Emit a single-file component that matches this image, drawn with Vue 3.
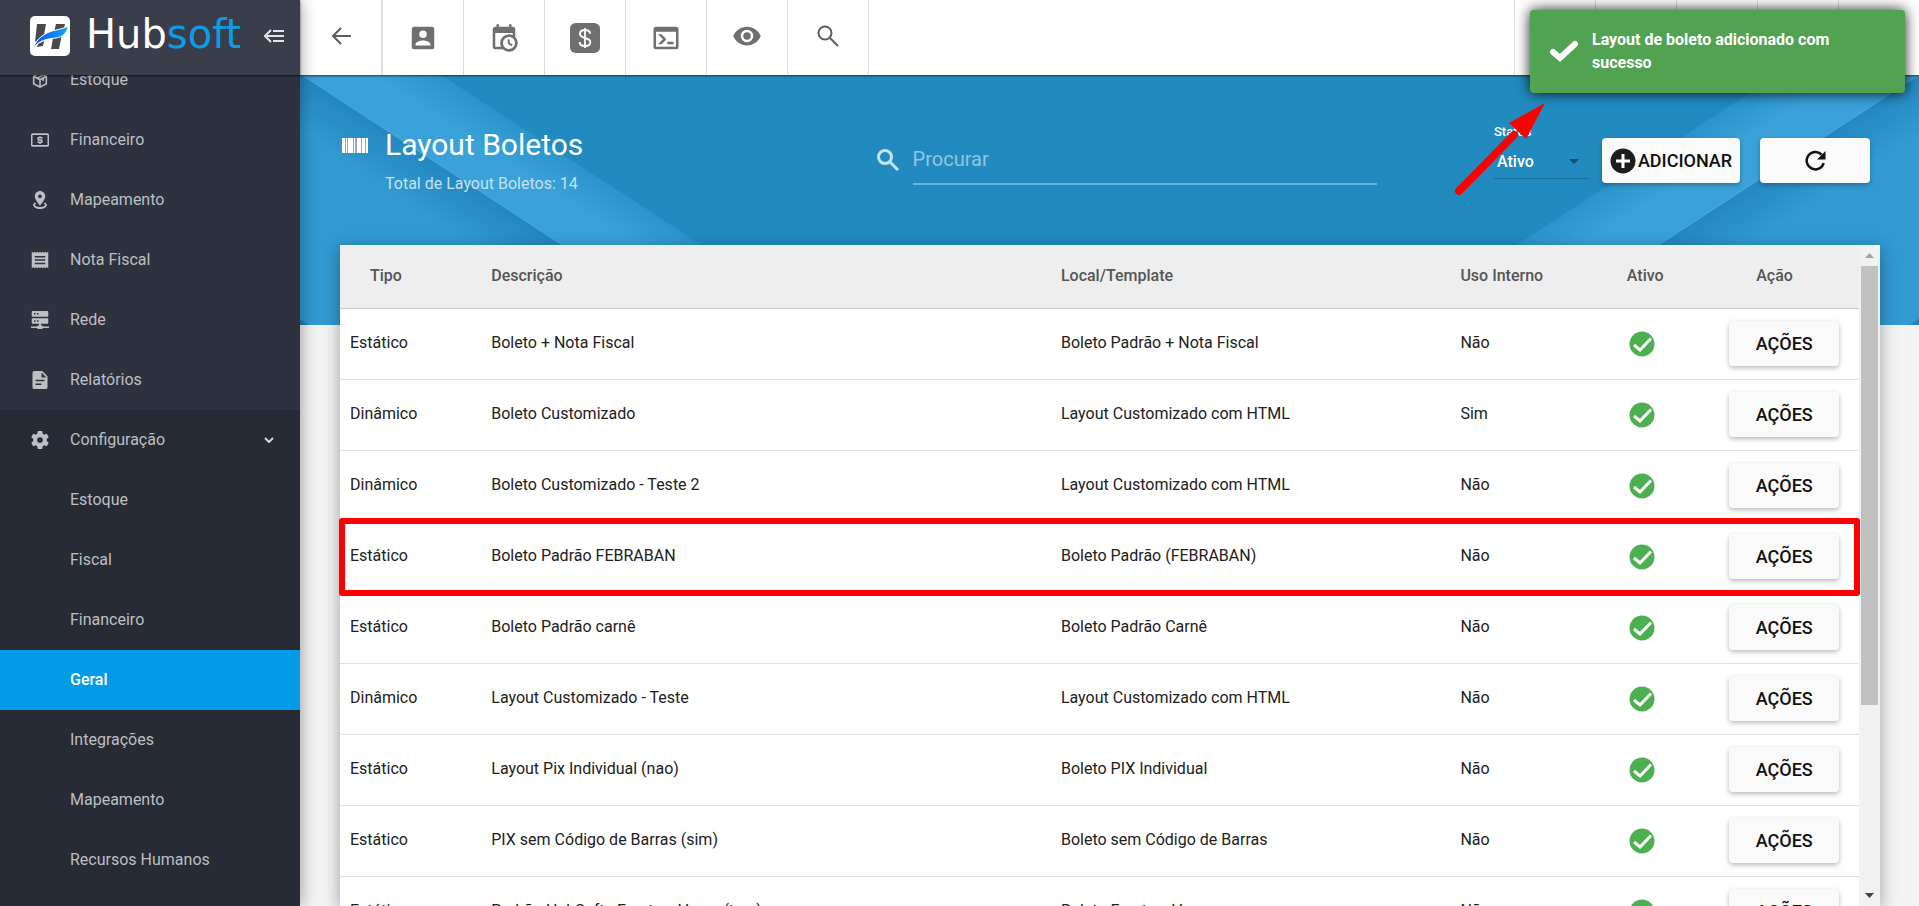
<script setup>
import { ref } from 'vue'

const menu = [
  { label: 'Estoque', icon: 'box' },
  { label: 'Financeiro', icon: 'cash' },
  { label: 'Mapeamento', icon: 'pin' },
  { label: 'Nota Fiscal', icon: 'receipt' },
  { label: 'Rede', icon: 'server' },
  { label: 'Relatórios', icon: 'file' },
]
const submenu = ['Estoque', 'Fiscal', 'Financeiro', 'Geral', 'Integrações', 'Mapeamento', 'Recursos Humanos']
const active = ref('Geral')

const icons = {
  box: 'M12 1.5 2.5 6.4v11.2L12 22.500l9.500-4.900V6.400L12 1.500Zm0 2.500 2.200 1.100-6 3.200L6 7.100 12 4Zm4.300 2.200L18 7.100l-6 3.100-1.700-.9 6-3.100ZM4.600 8.900 11 12.200v7.300l-6.400-3.300V8.900Zm14.800 0v7.300L13 19.500v-7.300l2.300-1.200v3l2-1v-3l2.100-1.100Z',
  cash: 'M2 3h20a2 2 0 0 1 2 2v14a2 2 0 0 1-2 2H2a2 2 0 0 1-2-2V5a2 2 0 0 1 2-2Zm0 2.300v13.400h20V5.300H2ZM11 7h2v1h2.500v2H10.500v1h4a1 1 0 0 1 1 1v3a1 1 0 0 1-1 1H13v1.200h-2V16H8.500v-2h5v-1h-4a1 1 0 0 1-1-1V9a1 1 0 0 1 1-1H11V7Z',
  pin: 'M12 0c3.900 0 7 3.100 7 7 0 4.700-7 12.500-7 12.500S5 11.700 5 7c0-3.900 3.100-7 7-7Zm0 4.500A2.500 2.500 0 1 0 12 9.500a2.500 2.500 0 0 0 0-5ZM5.800 15.200l1.300 1.900c-1.100.5-1.800 1-1.800 1.500 0 1.400 3 2.700 6.700 2.700s6.700-1.300 6.700-2.700c0-.5-.7-1-1.800-1.500l1.300-1.900c1.900.9 3 2.100 3 3.400 0 3-4.100 5.400-9.200 5.400s-9.200-2.400-9.200-5.400c0-1.300 1.100-2.500 3-3.400Z',
  receipt: 'M1 1l1.800 1.200L4.600 1l1.900 1.200L8.300 1l1.900 1.200L12 1l1.800 1.200L15.700 1l1.800 1.200L19.400 1l1.800 1.200L23 1v22l-1.800-1.200-1.800 1.200-1.900-1.200-1.800 1.200-1.900-1.200L12 23l-1.800-1.200L8.300 23l-1.800-1.200L4.600 23l-1.800-1.200L1 23V1Zm4 5.500v2h14v-2H5Zm0 4.500v2h14v-2H5Zm0 4.500v2h14v-2H5Z',
  server: 'M2 0h20a1 1 0 0 1 1 1v5.500a1 1 0 0 1-1 1H2a1 1 0 0 1-1-1V1a1 1 0 0 1 1-1Zm2 2.700v2h2v-2H4Zm4 0v2h2v-2H8ZM2 9.500h20a1 1 0 0 1 1 1V16a1 1 0 0 1-1 1h-8.500v2.500H16V20.500h8v2.300h-8.500V24h-7v-1.200H0v-2.300h8v-1h2.500V17H2a1 1 0 0 1-1-1v-5.500a1 1 0 0 1 1-1Zm2 2.700v2h2v-2H4Zm4 0v2h2v-2H8Z',
  file: 'M4.500 0H15l7 7v14.500a2.500 2.500 0 0 1-2.500 2.500h-15A2.500 2.500 0 0 1 2 21.500v-19A2.500 2.500 0 0 1 4.500 0ZM14 2v6.500h6.500L14 2ZM6 11.500v2h12v-2H6Zm0 5v2h8v-2H6Z',
  gear: 'M12 8.200A3.800 3.800 0 1 0 12 15.800a3.800 3.800 0 0 0 0-7.600Zm8.900 5.100 2.500 1.900c.2.200.3.500.1.800l-2.300 4c-.1.300-.5.400-.7.300l-2.900-1.200c-.6.500-1.300.9-2 1.200l-.4 3.100c-.1.300-.3.600-.6.600H9.400c-.3 0-.5-.3-.6-.6l-.4-3.100c-.7-.3-1.400-.7-2-1.200l-2.900 1.200c-.3.100-.6 0-.7-.3l-2.300-4c-.2-.3-.1-.6.100-.8l2.500-1.900a9 9 0 0 1 0-2.600L.6 8.800C.4 8.600.3 8.300.5 8l2.300-4c.1-.3.400-.4.700-.3l2.900 1.200c.6-.5 1.300-.9 2-1.200L8.800.6c.1-.3.300-.6.600-.6h5.200c.3 0 .5.300.6.600l.4 3.100c.7.300 1.400.7 2 1.200l2.900-1.200c.2-.1.600 0 .7.300l2.300 4c.2.300.1.600-.1.800l-2.500 1.900a9 9 0 0 1 0 2.600Z',
}

const tools = [
  { name: 'Cliente', d: 'M6 17c0-2 4-3.100 6-3.100s6 1.100 6 3.100v1H6m9-9a3 3 0 0 1-3 3 3 3 0 0 1-3-3 3 3 0 0 1 3-3 3 3 0 0 1 3 3M3 5v14a2 2 0 0 0 2 2h14a2 2 0 0 0 2-2V5a2 2 0 0 0-2-2H5a2 2 0 0 0-2 2Z' },
  { name: 'Agenda', d: 'M15 13h1.500v2.820l2.440 1.410-.75 1.300L15 16.690V13m4-5H5v11h4.670c-.43-.91-.67-1.930-.67-3a7 7 0 0 1 7-7c1.070 0 2.090.24 3 .67V8M5 21a2 2 0 0 1-2-2V5c0-1.110.89-2 2-2h1V1h2v2h8V1h2v2h1a2 2 0 0 1 2 2v6.100c1.240 1.260 2 2.990 2 4.900a7 7 0 0 1-7 7c-1.910 0-3.640-.76-4.900-2H5m11-9.850A4.850 4.850 0 0 0 11.150 16c0 2.680 2.170 4.850 4.850 4.850A4.850 4.850 0 0 0 20.850 16c0-2.680-2.170-4.850-4.850-4.850Z' },
  { name: 'Cobrança', money: true },
  { name: 'Terminal', d: 'M20 19V7H4v12h16m0-16a2 2 0 0 1 2 2v14a2 2 0 0 1-2 2H4a2 2 0 0 1-2-2V5c0-1.110.9-2 2-2h16m-7 14v-2h5v2h-5m-3.420-4L5.570 9H8.400l3.300 3.300c.39.390.39 1.030 0 1.420L8.420 17H5.590l3.990-4Z' },
  { name: 'Visualizar', d: 'M12 9a3 3 0 0 0-3 3 3 3 0 0 0 3 3 3 3 0 0 0 3-3 3 3 0 0 0-3-3m0 8a5 5 0 0 1-5-5 5 5 0 0 1 5-5 5 5 0 0 1 5 5 5 5 0 0 1-5 5m0-12.500C7 4.500 2.730 7.610 1 12c1.730 4.390 6 7.500 11 7.500s9.270-3.110 11-7.500c-1.730-4.390-6-7.500-11-7.500Z', high: true },
]

const rows = [
  ['Estático', 'Boleto + Nota Fiscal', 'Boleto Padrão + Nota Fiscal', 'Não'],
  ['Dinâmico', 'Boleto Customizado', 'Layout Customizado com HTML', 'Sim'],
  ['Dinâmico', 'Boleto Customizado - Teste 2', 'Layout Customizado com HTML', 'Não'],
  ['Estático', 'Boleto Padrão FEBRABAN', 'Boleto Padrão (FEBRABAN)', 'Não'],
  ['Estático', 'Boleto Padrão carnê', 'Boleto Padrão Carnê', 'Não'],
  ['Dinâmico', 'Layout Customizado - Teste', 'Layout Customizado com HTML', 'Não'],
  ['Estático', 'Layout Pix Individual (nao)', 'Boleto PIX Individual', 'Não'],
  ['Estático', 'PIX sem Código de Barras (sim)', 'Boleto sem Código de Barras', 'Não'],
  ['Estático', 'Padrão HubSoft - Frente e Verso (tras)', 'Boleto Frente e Verso', 'Não'],
]
const highlighted = 3
const search = ref('')
const status = ref('Ativo')
</script>

<template>
  <div class="app">
    <aside class="sidebar">
      <header class="brand">
        <svg class="brand-mark" viewBox="0 0 40 40" aria-hidden="true">
          <defs>
            <linearGradient id="swoosh" x1="0" x2="1">
              <stop offset="0" stop-color="#0a4dff" />
              <stop offset="1" stop-color="#12a5f4" />
            </linearGradient>
          </defs>
          <rect width="40" height="40" rx="5" fill="#fff" />
          <path d="M7 8h9l-2 11-9 7zM26 8h9l-1 4-10 4zM23 22l9-4-3 15h-8zM8 28l6-3-1 5-6 1z" fill="#4a4a4c" />
          <path d="M3 33C6 22 16 16 26 14c5-1 8-2 12-4-1 7-5 11-12 12C15 23 8 25 3 33Z" fill="url(#swoosh)" stroke="#fff" stroke-width="1" />
        </svg>
        <span class="brand-name">Hub<span>soft</span></span>
        <button class="collapse" aria-label="Recolher menu">
          <svg viewBox="0 0 20 14" fill="none" stroke="#e4e5e8" stroke-width="2"><path d="M7 1 1 7l6 6M9 2h11M3 7h17M9 12h11" /></svg>
        </button>
      </header>
      <nav class="nav">
        <div class="nav-main">
          <a v-for="m in menu" :key="m.label" href="#" class="nav-item">
            <svg viewBox="0 0 24 24"><path :d="icons[m.icon]" fill-rule="evenodd" /></svg>
            <span>{{ m.label }}</span>
          </a>
        </div>
        <div class="nav-group">
          <a href="#" class="nav-item">
            <svg viewBox="0 0 24 24"><path :d="icons.gear" fill-rule="evenodd" /></svg>
            <span>Configuração</span>
            <svg class="chevron" viewBox="0 0 10 6"><path d="m1 1 4 4 4-4" /></svg>
          </a>
          <a v-for="s in submenu" :key="s" href="#" class="nav-item sub" :class="{ active: s === active }" @click.prevent="active = s"><span>{{ s }}</span></a>
        </div>
      </nav>
    </aside>

    <main class="main">
      <div class="topbar">
        <button class="tool back" aria-label="Voltar">
          <svg viewBox="0 0 20 18" class="arrow-left"><path d="M10 1 2 9l8 8M2 9h18" /></svg>
        </button>
        <button v-for="t in tools" :key="t.name" class="tool" :class="{ high: t.high }" :aria-label="t.name">
          <svg v-if="t.money" viewBox="0 0 24 24">
            <rect width="24" height="24" rx="4.500" />
            <path d="M12 4v16M16 8.500c0-2-1.700-2.900-4-2.900s-4 1-4 3c0 4.600 8.300 2.200 8.300 6.800 0 2-1.800 3-4.300 3s-4.300-1-4.300-3.200" fill="none" stroke="#fff" stroke-width="1.500" />
          </svg>
          <svg v-else viewBox="0 0 24 24"><path :d="t.d" fill-rule="evenodd" /></svg>
        </button>
        <button class="tool high" aria-label="Pesquisar">
          <svg viewBox="0 0 22 22" class="lens"><circle cx="8" cy="8" r="6.500" /><path d="m13 13 8 8" /></svg>
        </button>
        <div class="spacer"></div>
        <div v-for="n in 5" :key="n" class="slot"></div>
      </div>

      <section class="hero">
        <svg class="hero-art" viewBox="0 0 1619 250" preserveAspectRatio="none" aria-hidden="true">
          <defs>
            <linearGradient id="shadeL" gradientUnits="userSpaceOnUse" x1="192" y1="125" x2="165" y2="166">
              <stop offset="0" stop-color="#2388bf" />
              <stop offset="1" stop-color="#319ad1" />
            </linearGradient>
            <linearGradient id="shadeR" gradientUnits="userSpaceOnUse" x1="1427" y1="125" x2="1454" y2="166">
              <stop offset="0" stop-color="#2388bf" />
              <stop offset="1" stop-color="#319ad1" />
            </linearGradient>
            <linearGradient id="bandL" gradientUnits="userSpaceOnUse" x1="332" y1="125" x2="312" y2="156">
              <stop offset="0" stop-color="#2b94cb" />
              <stop offset="1" stop-color="#3aa2d8" />
            </linearGradient>
            <linearGradient id="bandR" gradientUnits="userSpaceOnUse" x1="1286" y1="125" x2="1306" y2="156">
              <stop offset="0" stop-color="#2b94cb" />
              <stop offset="1" stop-color="#3aa2d8" />
            </linearGradient>
          </defs>
          <path d="M0 0h141l383 250H0z" fill="url(#bandL)" />
          <path d="M0 0h2l383 250H0z" fill="url(#shadeL)" />
          <path d="m2 0 383 250" stroke="#49ace0" stroke-width="1" fill="none" />
          <path d="M1619 0h-142l-383 250h525z" fill="url(#bandR)" />
          <path d="m1619 0-383 250h383z" fill="url(#shadeR)" />
          <path d="m1619 0-383 250" stroke="#49ace0" stroke-width="1" fill="none" />
          <path d="m0 244 9 6H0zM1619 244l-9 6h9z" fill="#2183b8" />
        </svg>
        <div class="heading">
          <svg class="barcode" viewBox="0 0 26 15" aria-hidden="true">
            <path d="M0 0h26v15H0z" fill="#8fa6dc" />
            <path d="M0 0h3v15H0zM4 0h1v15H4zM6 0h5v15H6zM12 0h1v15h-1zM15 0h4v15h-4zM20 0h3v15h-3zM24 0h2v15h-2z" />
          </svg>
          <div>
            <h1>Layout Boletos</h1>
            <p>Total de Layout Boletos: 14</p>
          </div>
        </div>
        <label class="search">
          <svg viewBox="0 0 22 22" aria-hidden="true"><circle cx="8" cy="8" r="6.500" /><path d="m13 13 8 8" /></svg>
          <input v-model="search" type="text" placeholder="Procurar" aria-label="Procurar" />
        </label>
        <div class="controls">
          <div class="status">
            <label for="status">Status</label>
            <div class="select">
              <select id="status" v-model="status">
                <option>Ativo</option>
                <option>Inativo</option>
              </select>
              <svg viewBox="0 0 10 5" aria-hidden="true"><path d="M0 0h10L5 5z" /></svg>
            </div>
          </div>
          <button class="btn add">
            <svg viewBox="0 0 26 26" aria-hidden="true"><circle cx="13" cy="13" r="12.500" fill="#1d1d1d" /><path d="M13 6v14M6 13h14" stroke="#fff" stroke-width="3" /></svg>
            ADICIONAR
          </button>
          <button class="btn" aria-label="Atualizar">
            <svg class="refresh" viewBox="0 0 21 21" aria-hidden="true"><path d="M16.500 4.500a8.700 8.700 0 1 0 2.200 8.700" fill="none" stroke="#111" stroke-width="2.500" /><path d="M20.500 1v8.500H12z" fill="#111" /></svg>
          </button>
        </div>
      </section>

      <section class="card">
        <table>
          <colgroup>
            <col class="c-tipo" /><col class="c-desc" /><col class="c-local" /><col class="c-uso" /><col class="c-ativo" /><col class="c-acao" />
          </colgroup>
          <thead>
            <tr>
              <th class="h-tipo">Tipo</th>
              <th>Descrição</th>
              <th>Local/Template</th>
              <th>Uso Interno</th>
              <th class="h-ativo">Ativo</th>
              <th class="h-acao">Ação</th>
            </tr>
          </thead>
          <tbody>
            <tr v-for="(r, i) in rows" :key="i">
              <td v-for="(c, j) in r" :key="j">{{ c }}</td>
              <td class="ok">
                <svg viewBox="0 0 26 26" aria-label="Ativo"><circle cx="13" cy="13" r="12.500" /><path d="m5 14 6 5L22 7.500" /></svg>
              </td>
              <td class="act">
                <button class="btn">AÇÕES</button>
                <span v-if="i === highlighted" class="mark"></span>
              </td>
            </tr>
          </tbody>
        </table>
        <div class="scroll" aria-hidden="true">
          <svg viewBox="0 0 9 5"><path d="M0 5h9L4.500 0z" fill="#a3a3a3" /></svg>
          <div class="track"><div class="thumb"></div></div>
          <svg viewBox="0 0 9 5"><path d="M0 0h9L4.500 5z" fill="#404040" /></svg>
        </div>
      </section>
    </main>

    <svg class="pointer" viewBox="0 0 100 100" aria-hidden="true">
      <path d="M15 89 70 33" stroke="#f00" stroke-width="8" stroke-linecap="round" />
      <path d="M101 1 65 21l17 16z" fill="#f00" />
    </svg>

    <div class="toast" role="status">
      <svg viewBox="0 0 30 24" aria-hidden="true"><path d="m4 13 7 6L26 5" /></svg>
      <span>Layout de boleto adicionado com sucesso</span>
    </div>
  </div>
</template>

<style>
body { margin: 0; overflow: hidden; }
</style>

<style scoped>
.app {
  position: relative;
  display: flex;
  height: 100vh;
  overflow: hidden;
  font-family: Roboto, "Liberation Sans", sans-serif;
  font-size: 16px;
  background: #f3f3f3;
}
* { box-sizing: border-box; }
button { border: 0; padding: 0; background: none; font: inherit; cursor: pointer; }
svg { flex: none; display: block; }
a { text-decoration: none; }

/* Sidebar */
.sidebar {
  position: relative;
  z-index: 3;
  display: flex;
  flex-direction: column;
  flex: 0 0 300px;
  background: #2d323e;
  box-shadow: 0 0 16px rgba(0, 0, 0, .4);
}
.brand {
  position: relative;
  z-index: 1;
  display: flex;
  align-items: center;
  flex: 0 0 75px;
  padding: 0 16px 4px 30px;
  background: #3a3d4a;
  box-shadow: 0 1px 2px rgba(0, 0, 0, .6);
}
.brand-mark { width: 40px; height: 40px; }
.brand-name { flex: 1; margin-left: 16px; font-family: "DejaVu Sans", sans-serif; font-size: 40px; line-height: 44px; padding-bottom: 4px; color: #fff; }
.brand-name span { color: #0e9ce6; }
.collapse svg { width: 20px; height: 14px; }
.nav { display: flex; flex-direction: column; flex: 1; overflow: hidden; }
.nav-main { margin-top: -25px; }
.nav-group { flex: 1 0 auto; background: #272b35; }
.nav-item {
  display: flex;
  align-items: center;
  height: 60px;
  padding: 0 26px 0 31px;
  color: #bdbfc3;
}
.nav-item span { flex: 1; margin-left: 21px; padding-bottom: 2px; }
.nav-item svg { width: 18px; height: 18px; fill: #bdbfc3; }
.nav-item svg.chevron { width: 10px; height: 6px; fill: none; stroke: #d6d7da; stroke-width: 2; }
.nav-item.sub { padding-left: 49px; }
.nav-item.active { background: #039be5; color: #fff; font-weight: 500; }

/* Top bar */
.main { flex: 1; min-width: 0; display: flex; flex-direction: column; overflow: hidden; }
.topbar {
  position: relative;
  z-index: 1;
  display: flex;
  flex: 0 0 75px;
  background: #fff;
  box-shadow: 0 1px 2px rgba(0, 0, 0, .6);
}
.tool {
  display: flex;
  align-items: center;
  justify-content: center;
  width: 81px;
  border-right: 1px solid #dedede;
}
.tool svg { width: 30px; height: 30px; fill: #6f6f6f; }
.tool.back { width: 83px; border-right-width: 2px; }
.tool.back, .tool.high { padding-bottom: 4px; }
.tool svg.arrow-left { width: 20px; height: 18px; fill: none; stroke: #5c5c5c; stroke-width: 2; }
.tool svg.lens { width: 22px; height: 22px; fill: none; stroke: #5c5c5c; stroke-width: 2; }
.spacer { flex: 1; }
.slot { width: 81px; border-left: 1px solid #dedede; }

/* Hero */
.hero {
  position: relative;
  display: flex;
  flex: 0 0 250px;
  align-items: flex-start;
  padding: 0 49px 0 42px;
  background: #218bc0;
}
.hero-art { position: absolute; inset: 0; width: 100%; height: 100%; }
.heading, .search, .controls { position: relative; }
.heading { display: flex; flex: 13 1 0; gap: 17px; padding-top: 50px; color: #fff; }
.barcode { width: 26px; height: 15px; margin-top: 13px; fill: #fff; }
h1 { margin: 0; font-size: 30px; line-height: 40px; font-weight: 400; }
.heading p { margin: 9px 0 0; line-height: 20px; color: #c5e1f0; }
.search { display: flex; align-items: center; gap: 14px; flex: 0 1 500px; height: 46px; margin-top: 64px; }
.search svg { width: 22px; height: 22px; margin-bottom: 4px; fill: none; stroke: #c8e2f0; stroke-width: 3; }
.search input {
  flex: 1;
  min-width: 0;
  height: 46px;
  padding: 0 0 4px;
  border: 0;
  border-bottom: 2px solid #6cb2d8;
  outline: 0;
  background: none;
  color: #fff;
  font: inherit;
  font-size: 20px;
}
.search input::placeholder { color: #90c5e0; opacity: 1; }
.controls { display: flex; flex: 12 1 0; justify-content: flex-end; align-items: flex-start; padding-top: 63px; }
.status { width: 95px; margin: -15px 13px 0 0; color: #fff; font-weight: 500; }
.status label { display: block; font-size: 13px; line-height: 18px; }
.select { display: flex; align-items: center; height: 38px; border-bottom: 1px solid #1c6f9b; padding: 3px 10px 0 0; }
.select select { flex: 1; appearance: none; border: 0; outline: 0; padding: 0 3px; background: none; color: #fff; font: inherit; }
.select svg { width: 10px; height: 5px; fill: #134f6e; }

.btn {
  display: inline-flex;
  align-items: center;
  justify-content: center;
  width: 110px;
  height: 45px;
  border-radius: 4px;
  background: #fafafa;
  box-shadow: 0 2px 5px rgba(0, 0, 0, .28);
  color: #111;
  font-size: 18px;
  font-weight: 500;
}
.btn.add { width: 138px; margin-right: 20px; gap: 2px; }
.btn.add svg { width: 26px; height: 26px; }
.btn .refresh { width: 21px; height: 21px; }

/* Table card */
.card {
  position: relative;
  display: flex;
  flex: 1 0 0;
  min-height: 0;
  margin: -80px 39px 0 40px;
  background: #fff;
  box-shadow: 0 4px 16px rgba(0, 0, 0, .35);
}
table { flex: 1; width: 100%; height: 1px; table-layout: fixed; border-collapse: collapse; }
.c-tipo { width: 9.300%; }
.c-desc { width: 37.500%; }
.c-local { width: 26.300%; }
.c-uso { width: 10.300%; }
.c-ativo { width: 7.400%; }
.c-acao { width: 9.200%; }
th {
  height: 63px;
  padding: 0 10px 2px;
  border-bottom: 1px solid #ccc;
  background: #eee;
  color: #555;
  font-weight: 500;
  text-align: left;
}
th.h-tipo { padding-left: 30px; }
th.h-ativo { padding-left: 20px; }
th.h-acao { padding-left: 37px; }
tbody tr { position: relative; }
td { height: 71px; padding: 0 10px 2px; border-bottom: 1px solid #e0e0e0; color: #212121; white-space: nowrap; }
td.ok { padding: 0 22px; }
td.ok svg { width: 26px; height: 26px; fill: #4caf50; }
td.ok path { fill: none; stroke: #fff; stroke-width: 3; }
td.act { padding: 0 10px; }
td.act .btn { vertical-align: middle; }
.mark { position: absolute; z-index: 1; inset: -3px -1px -4px -1px; border: 6px solid #f00; border-radius: 3px; }

.scroll {
  display: flex;
  flex-direction: column;
  align-items: center;
  flex: 0 0 21px;
  padding: 8px 0;
  background: #f1f1f1;
}
.scroll svg { width: 9px; height: 5px; }
.track { flex: 1; width: 17px; margin: 8px 0; }
.thumb { height: 71%; background: #c1c1c1; }

/* Overlays */
.toast {
  position: absolute;
  z-index: 5;
  top: 10px;
  right: 14px;
  display: flex;
  align-items: center;
  gap: 13px;
  width: 375px;
  height: 83px;
  padding: 0 50px 2px 19px;
  border-radius: 4px;
  background: #51a351;
  box-shadow: 0 0 14px rgba(0, 0, 0, .9);
  color: #fff;
  font-weight: 700;
  line-height: 23px;
}
.toast svg { width: 30px; height: 24px; fill: none; stroke: #fff; stroke-width: 6; stroke-linecap: round; }
.pointer { position: absolute; z-index: 4; top: 102px; right: 375px; width: 100px; height: 100px; overflow: visible; }
</style>
